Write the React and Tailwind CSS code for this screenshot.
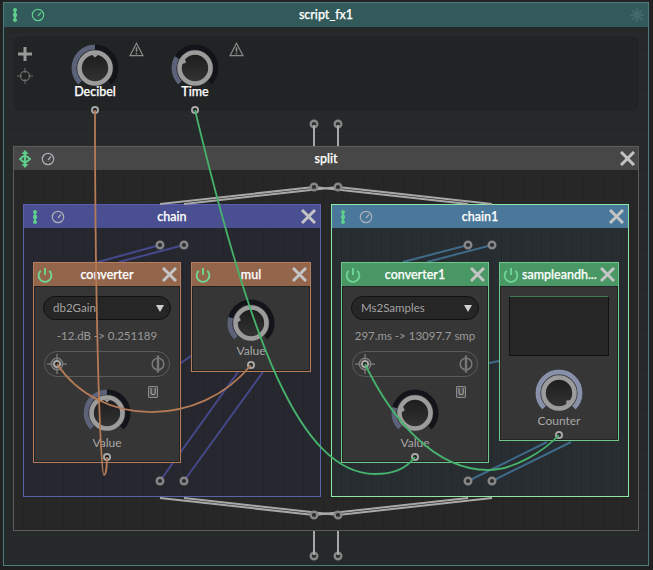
import React, { useId } from "react";

const arcPoint = (r, deg) => {
  const a = ((deg - 90) * Math.PI) / 180;
  return [24 + r * Math.cos(a), 24 + r * Math.sin(a)];
};

const arc = (r, from, to) => {
  const [x1, y1] = arcPoint(r, from);
  const [x2, y2] = arcPoint(r, to);
  return `M${x1} ${y1} A${r} ${r} 0 ${to - from > 180 ? 1 : 0} 1 ${x2} ${y2}`;
};

function Knob({ value, arcColor = "#5c6379" }) {
  const id = useId();
  const [tipX, tipY] = arcPoint(10.5, value);
  const [a, b] = arcPoint(14, value - 14);
  const [c, d] = arcPoint(14, value + 14);
  return (
    <svg width="48" height="48" viewBox="0 0 48 48" className="block shrink-0">
      <defs>
        <linearGradient id={id} x1="0" y1="0" x2="0" y2="1">
          <stop offset="0" stopColor="#1c1c1c" />
          <stop offset="1" stopColor="#343434" />
        </linearGradient>
      </defs>
      <path d={arc(21, -135, 135)} fill="none" stroke="#13131a" strokeWidth="5" />
      <path d={arc(21, -135, value)} fill="none" stroke={arcColor} strokeWidth="5" />
      <circle cx="24" cy="24" r="15.5" fill={`url(#${id})`} stroke="#9c9c9c" strokeWidth="4.6" />
      <path d={`M${a} ${b} L${tipX} ${tipY} L${c} ${d} Z`} fill="#9c9c9c" />
    </svg>
  );
}

function Dots() {
  return (
    <svg width="8" height="14" viewBox="0 0 8 14" className="block">
      <path d="M4 1v12" stroke="#5fce8c" strokeWidth="2" />
      <circle cx="4" cy="2" r="2" fill="#5fce8c" />
      <circle cx="4" cy="7" r="2.2" fill="#5fce8c" />
      <circle cx="4" cy="12" r="2" fill="#5fce8c" />
    </svg>
  );
}

function Clock({ color = "#aeb0b8" }) {
  return (
    <svg width="14" height="14" viewBox="0 0 14 14" className="block">
      <circle cx="7" cy="7" r="5.7" fill="none" stroke={color} strokeWidth="1.2" />
      <path d="M7 8 L10 4.5" stroke={color} strokeWidth="1.2" />
    </svg>
  );
}

function Close({ size = 15, color = "#c4c4c4" }) {
  return (
    <svg width={size} height={size} viewBox="0 0 15 15" className="block">
      <path d="M1 1 L14 14 M14 1 L1 14" stroke={color} strokeWidth="3" />
    </svg>
  );
}

function Power() {
  return (
    <svg width="16" height="16" viewBox="0 0 24 24" fill="none" stroke="#70d693" strokeWidth="2.8" className="block">
      <path d="M12 1.5v10.5" />
      <path d="M18.4 5.6a9.6 9.6 0 1 1-12.8 0" />
    </svg>
  );
}

function Warning() {
  return (
    <svg width="15" height="15" viewBox="0 0 15 15" fill="none" className="block">
      <path d="M7.5 1.3 L14 13.6 L1 13.6 Z" stroke="#8a8a8a" strokeWidth="1.2" />
      <path d="M7.5 5.2v4.6" stroke="#8a8a8a" strokeWidth="1.6" />
      <path d="M7.5 10.8v1.5" stroke="#8a8a8a" strokeWidth="1.6" />
    </svg>
  );
}

function Target({ color = "#7c7c7c", size = 16 }) {
  return (
    <svg width={size} height={size} viewBox="0 0 16 16" fill="none" className="block">
      <circle cx="8" cy="8" r="4.6" stroke={color} strokeWidth="1.1" />
      <path d="M8 0v5M8 11v5M0 8h5M11 8h5" stroke={color} strokeWidth="1" />
    </svg>
  );
}

function SplitCircle() {
  return (
    <svg width="14" height="18" viewBox="0 0 14 18" fill="none" className="block">
      <circle cx="7" cy="9" r="5.8" stroke="#777" strokeWidth="1.6" />
      <path d="M7 0.5v17" stroke="#777" strokeWidth="2.4" />
    </svg>
  );
}

function Move() {
  return (
    <svg width="12" height="18" viewBox="0 0 12 18" className="block">
      <path d="M6 0 L9.5 4 H2.5 Z M6 18 L9.5 14 H2.5 Z" fill="#5fce8c" />
      <path d="M6 3v12" stroke="#5fce8c" strokeWidth="2" />
      <path d="M6 5 L11 9 L6 13 L1 9 Z" fill="none" stroke="#5fce8c" strokeWidth="2" />
    </svg>
  );
}

function Snow() {
  return (
    <svg width="14" height="14" viewBox="0 0 14 14" className="block">
      <path d="M7 0v14M0 7h14M2 2l10 10M12 2L2 12" stroke="#41696a" strokeWidth="2.2" />
    </svg>
  );
}

function ModeSelect({ text }) {
  return (
    <div className="flex h-[24px] mx-[8px] items-center justify-between rounded-full border border-[#111] bg-[#262626] pl-[9px] pr-[6px]">
      <span className="text-[11.5px] text-[#a4a4a4]">{text}</span>
      <span className="w-0 h-0 border-x-[4px] border-t-[7px] border-x-transparent border-t-[#cfcfcf]" />
    </div>
  );
}

const titleText = "flex-1 text-center text-[12.5px] font-medium text-white [-webkit-text-stroke:0.25px_white]";

function Node({ title, w, h, head, line, children }) {
  return (
    <div className={`relative z-10 flex flex-col border ${w} ${h} ${line}`}>
      <div className={`flex h-[23px] shrink-0 items-center ${head}`}>
        <div className="flex w-[22px] shrink-0 justify-center"><Power /></div>
        <div className={`${titleText} whitespace-nowrap pt-[2px]`}>{title}</div>
        <div className="flex w-[22px] shrink-0 justify-center"><Close /></div>
      </div>
      <div className="relative flex-1 border border-[#232323] bg-[#363636]">{children}</div>
    </div>
  );
}

function Converter({ mode, info, value, line, head }) {
  return (
    <Node title={mode.title} w="w-[148px]" h="h-[201px]" head={head} line={line}>
      <div className="flex flex-col pt-[9px]">
        <ModeSelect text={mode.text} />
        <div className="mt-[8px] h-[16px] text-center text-[11.5px] leading-[16px] text-[#9a9a9a]">{info}</div>
        <div className="mx-[9px] mt-[7px] flex h-[26px] items-center justify-between rounded-full border-[1.5px] border-[#5b5b5b] pl-[2px] pr-[4px]">
          <Target size={20} />
          <SplitCircle />
        </div>
        <div className="mt-[12px] flex justify-center"><Knob value={value} /></div>
        <div className="-mt-[1px] h-[14px] text-center text-[12px] leading-[14px] text-[#a8a8a8]">Value</div>
      </div>
      <div className="absolute left-[113px] top-[99px] h-[12px] w-[10px] rounded-[1px] border border-[#8a8a8a] bg-[#4a4a4a] text-center text-[9px] leading-[10px] text-[#b0b0b0]">U</div>
    </Node>
  );
}

function Chain({ title, box, head, body, cableColor, cables, children }) {
  return (
    <div className={`relative h-[293px] w-[298px] border ${box} ${body}`}>
      <div className={`flex h-[23px] items-center ${head}`}>
        <div className="flex w-[22px] justify-center"><Dots /></div>
        <div className="flex w-[24px] justify-center"><Clock /></div>
        <div className={`${titleText} pt-[1px]`}>{title}</div>
        <div className="flex w-[46px] justify-end pr-[4px]"><Close /></div>
      </div>
      <svg className="absolute left-0 top-0" width="296" height="291" viewBox={cables.viewBox} fill="none">
        {cables.lines.map((d) => (
          <path key={d} d={d} stroke={cableColor} strokeWidth="2" />
        ))}
      </svg>
      <div className="flex items-start gap-[10px] pl-[9px] pt-[34px]">{children}</div>
    </div>
  );
}

const hatch =
  "bg-[repeating-linear-gradient(0deg,#252929_0,#252929_9px,#282c2c_9px,#282c2c_10px)]";

const ports = [
  [314, 124], [338, 124], [314, 187], [338, 187], [314, 515], [338, 515], [314, 556], [338, 556],
  [160, 245], [184, 245], [160, 481], [184, 481], [468, 245], [492, 245], [468, 481], [492, 481],
];
const modPorts = [
  [95, 110], [195, 110], [251, 365], [107, 457], [415, 457], [559, 435], [57, 364], [365, 364],
];

export default function App() {
  return (
    <div className="relative h-[570px] w-[653px] overflow-hidden bg-[#222] [font-family:Lato,sans-serif]">
      <div className="absolute left-0 right-0 top-[565px] bottom-0 bg-[#1f1f1f]" />
      <div className={`relative ml-[3px] mt-[2px] h-[564px] w-[646px] border border-[#4d7c7a] ${hatch}`}>
        <div className="flex h-[24px] items-center bg-[#325a5a]">
          <div className="flex w-[22px] justify-center"><Dots /></div>
          <div className="flex w-[24px] justify-center"><Clock color="#5fce8c" /></div>
          <div className={titleText}>script_fx1</div>
          <div className="flex w-[46px] justify-end pr-[4px]"><Snow /></div>
        </div>

        {/* parameter panel */}
        <div className="mx-[9px] mt-[9px] flex h-[75px] rounded-[8px] bg-[#212424] pt-[8px]">
          <div className="mr-[8px] flex w-[24px] flex-col items-center gap-[7px] pt-[3px]">
            <svg width="14" height="14" viewBox="0 0 14 14" className="block">
              <path d="M7 0v14M0 7h14" stroke="#999" strokeWidth="3" />
            </svg>
            <Target color="#6f6f6f" />
          </div>
          {[["Decibel", 0], ["Time", -60]].map(([name, value]) => (
            <div key={name} className="relative flex w-[100px] flex-col items-center">
              <Knob value={value} />
              <div className="-mt-[7px] h-[14px] text-[12.5px] font-medium leading-[14px] text-white [-webkit-text-stroke:0.25px_white]">{name}</div>
              <div className="absolute left-[84px] top-[-2px]"><Warning /></div>
            </div>
          ))}
        </div>

        {/* split container */}
        <div className="mx-[9px] mt-[35px] h-[385px] w-[626px] border border-[#5c5c5c] bg-[repeating-linear-gradient(90deg,#272727_0,#272727_9px,#242424_9px,#242424_10px)]">
          <div className="flex h-[23px] items-center bg-[#474747]">
            <div className="flex w-[22px] justify-center"><Move /></div>
            <div className="flex w-[24px] justify-center"><Clock /></div>
            <div className={`${titleText} pt-[1px]`}>split</div>
            <div className="flex w-[46px] justify-end pr-[3px]"><Close /></div>
          </div>
          <div className="flex gap-[10px] pl-[9px] pt-[34px]">
            <Chain
              title="chain"
              box="border-[#5b5fb0]"
              head="bg-[#4a4f92]"
              body="bg-[repeating-linear-gradient(90deg,#27282f_0,#27282f_9px,#24252b_9px,#24252b_10px)]"
              cableColor="#45498c"
              cables={{
                viewBox: "24 205 296 291",
                lines: ["M160 245 L98 262", "M184 245 L119 262", "M160 481 L238 372", "M184 481 L263 372", "M181 363 L191 356"],
              }}
            >
              <Converter
                mode={{ title: "converter", text: "db2Gain" }}
                info="-12.dB -> 0.251189"
                value={0}
                head="bg-[#93654b]"
                line="border-[#b57d5c]"
              />
              <Node title="mul" w="w-[120px]" h="h-[110px]" head="bg-[#93654b]" line="border-[#b57d5c]">
                <div className="flex flex-col items-center pt-[12px]">
                  <Knob value={-75} />
                  <div className="-mt-[3px] h-[14px] text-[12px] leading-[14px] text-[#a8a8a8]">Value</div>
                </div>
              </Node>
            </Chain>
            <Chain
              title="chain1"
              box="border-[#8de8a4]"
              head="bg-[#49789a]"
              body="bg-[repeating-linear-gradient(90deg,#272d31_0,#272d31_9px,#24292d_9px,#24292d_10px)]"
              cableColor="#3f6a88"
              cables={{
                viewBox: "332 205 296 291",
                lines: ["M468 245 L403 262", "M492 245 L427 262", "M468 481 L547 442", "M492 481 L571 442", "M489 363 L499 361"],
              }}
            >
              <Converter
                mode={{ title: "converter1", text: "Ms2Samples" }}
                info="297.ms -> 13097.7 smp"
                value={-75}
                head="bg-[#489764]"
                line="border-[#6fc78a]"
              />
              <Node title="sampleandh..." w="w-[120px]" h="h-[179px]" head="bg-[#489764]" line="border-[#6fc78a]">
                <div className="flex flex-col items-center pt-[9px]">
                  <div className="h-[60px] w-[100px] border border-[#111] border-t-[#3d7a4d] bg-[#262626]" />
                  <div className="mt-[13px]"><Knob value={135} arcColor="#8890aa" /></div>
                  <div className="-mt-[3px] h-[14px] text-[12px] leading-[14px] text-[#a8a8a8]">Counter</div>
                </div>
              </Node>
            </Chain>
          </div>
        </div>
      </div>

      {/* patch cables and ports sit over everything */}
      <svg className="absolute left-0 top-0 z-20" width="653" height="570" viewBox="0 0 653 570" fill="none">
        <g stroke="#a8a8a8" strokeWidth="2">
          <path d="M314 124V146M338 124V146M314 531V556M338 531V556" />
          <path d="M314 187L160 204M338 187L184 204M314 187L468 204M338 187L492 204" />
          <path d="M160 498L314 515M184 498L338 515M468 498L314 515M492 498L338 515" />
        </g>
        {ports.map(([x, y]) => (
          <circle key={`${x}-${y}`} cx={x} cy={y} r="3.3" fill="#2b2e30" stroke="#868686" strokeWidth="2.4" />
        ))}
        <path d="M314 125v4M338 125v4M314 555v-4M338 555v-4" stroke="#a8a8a8" strokeWidth="2" />
        {modPorts.map(([x, y]) => (
          <circle key={`${x}-${y}`} cx={x} cy={y} r="3" fill="#161616" stroke="#a8a8a8" strokeWidth="2" />
        ))}
        <g stroke="#b57a56" strokeWidth="1.8">
          <path d="M95 110 C95 300 100 475 104 475 C106 475 107 465 107 457" />
          <path d="M57 364 C100 428 200 428 251 365" />
        </g>
        <g stroke="#46b26c" strokeWidth="1.8">
          <path d="M195 110 C250 340 300 474 375 474 C392 474 405 470 415 457" />
          <path d="M365 364 C392 420 435 470 488 470 C515 470 545 450 559 435" />
        </g>
      </svg>
    </div>
  );
}
